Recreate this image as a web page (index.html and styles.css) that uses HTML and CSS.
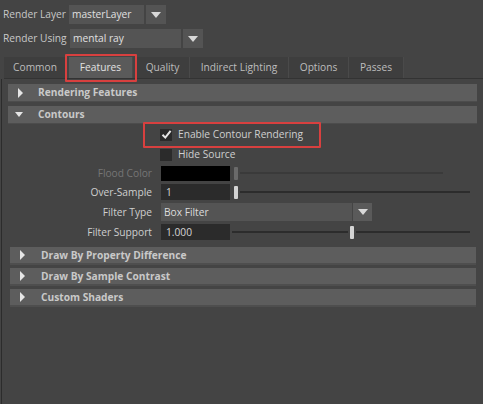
FILE: index.html
```html
<!DOCTYPE html>
<html>
<head>
<meta charset="utf-8">
<link rel="stylesheet" href="styles.css">
</head>
<body>
<div class="top">
  <div class="field-row">
    <span class="top-label">Render Layer</span>
    <div class="combo combo-layer"><span class="combo-text">masterLayer</span></div>
    <div class="combo-btn"><span class="arrow-down"></span></div>
  </div>
  <div class="field-row">
    <span class="top-label">Render Using</span>
    <div class="combo combo-using"><span class="combo-text">mental ray</span></div>
    <div class="combo-btn"><span class="arrow-down"></span></div>
  </div>
</div>

<div class="tabbar">
  <div class="tab tab-common">Common</div>
  <div class="tab tab-features active">Features</div>
  <div class="tab tab-quality">Quality</div>
  <div class="tab tab-indirect">Indirect Lighting</div>
  <div class="tab tab-options">Options</div>
  <div class="tab tab-passes">Passes</div>
</div>

<div class="panel">
  <div class="frame-header"><span class="tri-right"></span><span class="frame-title">Rendering Features</span></div>
  <div class="frame-header"><span class="tri-down"></span><span class="frame-title">Contours</span></div>

  <div class="frame-body">
    <div class="row row-enable highlight">
      <span class="label"></span>
      <span class="checkbox checked"><svg width="11" height="11" viewBox="0 0 11 11"><path d="M1.5 5.8 L4.3 8.6 L9.6 1.8" fill="none" stroke="#e6e6e6" stroke-width="2"/></svg></span>
      <span class="check-text">Enable Contour Rendering</span>
    </div>
    <div class="row row-hide">
      <span class="label"></span>
      <span class="checkbox"></span>
      <span class="check-text">Hide Source</span>
    </div>
    <div class="row row-flood">
      <span class="label disabled">Flood Color</span>
      <span class="swatch"></span>
      <div class="slider slider-flood"><span class="handle handle-dim"></span><span class="track track-dim"></span></div>
    </div>
    <div class="row">
      <span class="label">Over-Sample</span>
      <span class="num-field">1</span>
      <div class="slider"><span class="handle"></span><span class="track"></span></div>
    </div>
    <div class="row">
      <span class="label">Filter Type</span>
      <div class="combo combo-filter"><span class="combo-text">Box Filter</span></div>
      <div class="combo-btn"><span class="arrow-down"></span></div>
    </div>
    <div class="row">
      <span class="label">Filter Support</span>
      <span class="num-field">1.000</span>
      <div class="slider slider-support"><span class="track track-left"></span><span class="handle"></span><span class="track"></span></div>
    </div>

    <div class="sub-frames">
      <div class="frame-header sub"><span class="tri-right"></span><span class="frame-title">Draw By Property Difference</span></div>
      <div class="frame-header sub"><span class="tri-right"></span><span class="frame-title">Draw By Sample Contrast</span></div>
      <div class="frame-header sub"><span class="tri-right"></span><span class="frame-title">Custom Shaders</span></div>
    </div>
  </div>
</div>
</body>
</html>
```

FILE: styles.css
```css
html, body {
  margin: 0;
  padding: 0;
}
body {
  width: 483px;
  height: 404px;
  overflow: hidden;
  background: #444444;
  color: #cfcfcf;
  font-family: "Open Sans", "Liberation Sans", sans-serif;
  font-size: 10.2px;
  line-height: 1;
  white-space: nowrap;
}

/* top rows */
.top {
  display: flex;
  flex-direction: column;
  gap: 5px;
  padding: 5px 0 0 3px;
}
.field-row {
  display: flex;
  align-items: center;
  height: 19px;
}
.top-label {
  width: 66px;
  color: #c8c8c8;
}
.combo {
  height: 19px;
  background: #545454;
  display: flex;
  align-items: center;
  padding-left: 3px;
  box-sizing: border-box;
  color: #e0e0e0;
}
.combo-layer { width: 75px; }
.combo-using { width: 111px; margin-left: 1px; }
.combo-btn {
  width: 20px;
  height: 19px;
  margin-left: 2px;
  background: #545454;
  display: flex;
  align-items: center;
  justify-content: center;
}
.arrow-down {
  width: 0;
  height: 0;
  border-left: 5px solid transparent;
  border-right: 5px solid transparent;
  border-top: 6px solid #d8d8d8;
}

/* tabs */
.tabbar {
  display: flex;
  margin-top: 9px;
  margin-left: 4px;
  height: 21px;
  border-bottom: 1px solid #333333;
}
.tab {
  height: 21px;
  display: flex;
  align-items: center;
  justify-content: center;
  background: #3e3e3e;
  color: #bdbdbd;
  border-right: 1px solid #4a4a4a;
  box-sizing: border-box;
}
.tab-common { width: 63px; }
.tab-quality { width: 54px; }
.tab-indirect { width: 99px; }
.tab-options { width: 60px; }
.tab-passes { width: 55px; }
.tab.active {
  background: #5a5a5a;
  color: #e2e2e2;
  position: relative;
  margin-left: 2px;
  width: 64px;
  margin-right: 3px;
}
.tab.active::after {
  content: "";
  position: absolute;
  left: -4px;
  right: -5px;
  top: -3px;
  bottom: -4px;
  border: 2px solid #d8403f;
  border-radius: 1px;
}

/* panel */
.panel {
  margin-left: 1px;
  border-left: 1px solid #2c2c2c;
  height: 330px;
  padding: 5px 6px 0 6px;
  display: flex;
  flex-direction: column;
  gap: 4px;
}
.frame-header {
  height: 17px;
  background: #5d5d5d;
  border-bottom: 1px solid #4c4c4c;
  display: flex;
  align-items: center;
  font-weight: bold;
  color: #c9c9c9;
  flex: none;
}
.tri-right {
  width: 0;
  height: 0;
  border-top: 5px solid transparent;
  border-bottom: 5px solid transparent;
  border-left: 5px solid #e6e6e6;
  margin-left: 10px;
  margin-right: 15px;
}
.tri-down {
  width: 0;
  height: 0;
  border-left: 4px solid transparent;
  border-right: 4px solid transparent;
  border-top: 5px solid #e6e6e6;
  margin-left: 7px;
  margin-right: 15px;
}

.frame-body {
  display: flex;
  flex-direction: column;
  margin-top: -4px;
}
.row {
  display: flex;
  align-items: center;
  height: 20px;
  position: relative;
}
.row-enable { height: 21px; }
.row-hide { height: 19px; }
.row-flood { height: 18px; }
.label {
  width: 153px;
  text-align: right;
  padding-right: 9px;
  box-sizing: border-box;
  flex: none;
  color: #cfcfcf;
}
.label.disabled { color: #767676; }
.checkbox {
  width: 12px;
  height: 12px;
  background: #2b2b2b;
  display: flex;
  align-items: center;
  justify-content: center;
  margin-left: -1px;
  margin-right: 6px;
}
.check-text { color: #cfcfcf; }
.highlight::after {
  content: "";
  position: absolute;
  left: 135px;
  width: 174px;
  top: -2px;
  bottom: -3px;
  border: 2px solid #d8403f;
  border-radius: 1px;
}

.swatch {
  width: 69px;
  height: 15px;
  background: #000000;
  flex: none;
}
.num-field {
  width: 69px;
  height: 16px;
  background: #2b2b2b;
  color: #d6d6d6;
  display: flex;
  align-items: center;
  padding-left: 5px;
  box-sizing: border-box;
  flex: none;
}
.slider {
  display: flex;
  align-items: center;
  flex: none;
  width: 236px;
  margin-left: 4px;
}
.slider-flood { width: 209px; }
.handle {
  width: 4px;
  height: 13px;
  border-radius: 1px;
  background: #d4d4d4;
  flex: none;
}
.handle-dim { background: #6a6a6a; }
.track {
  height: 2px;
  background: #2c2c2c;
  flex: 1;
  margin-left: 2px;
}
.track-dim { background: #3a3a3a; }
.slider-support { margin-left: 2px; width: 238px; }
.track-left { flex: none; width: 116px; margin-left: 0; margin-right: 2px; }

.combo-filter {
  width: 191px;
  height: 18px;
  color: #dcdcdc;
}
.row .combo-btn { height: 18px; margin-left: 1px; width: 19px; background: #5a5a5a; }

.sub-frames {
  display: flex;
  flex-direction: column;
  gap: 3px;
  padding: 5px 1px 0 2px;
}
.frame-header.sub {
  height: 18px;
  box-sizing: border-box;
  border-bottom: 2px solid #4e4e4e;
}
.frame-header.sub .tri-right { margin-right: 16px; }
```
